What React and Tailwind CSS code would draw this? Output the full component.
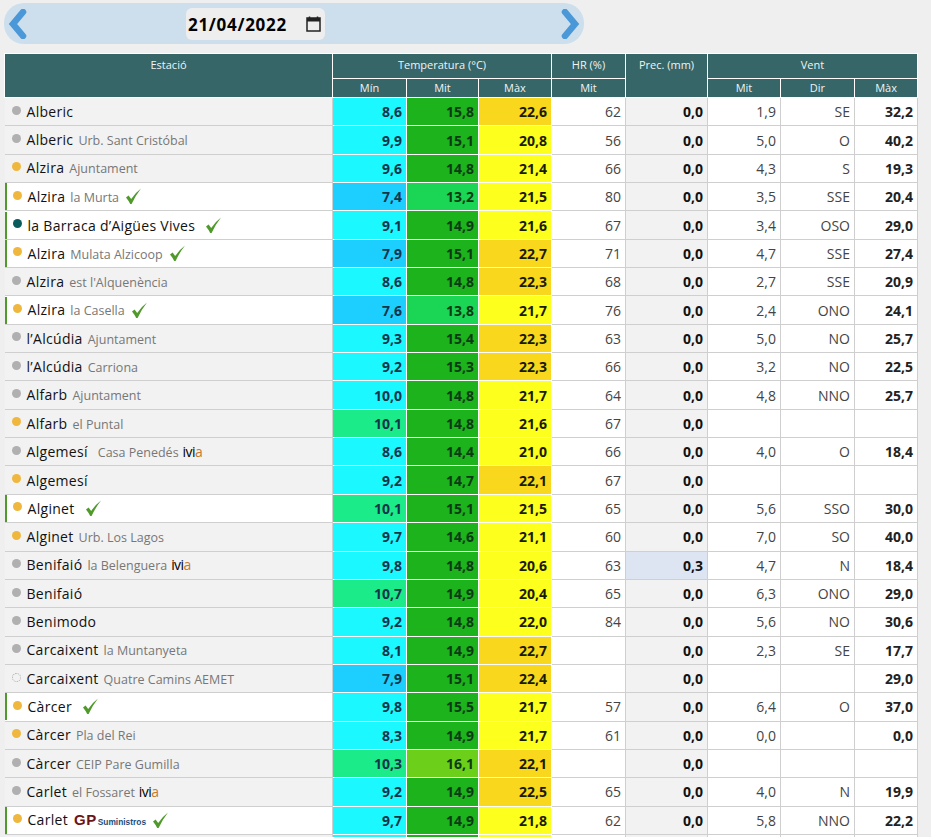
const rows = [
  ["g","Alberic","",0,"8,6","15,8","22,6","62","0,0","1,9","SE","32,2"],
  ["g","Alberic","Urb. Sant Cristóbal",0,"9,9","15,1","20,8","56","0,0","5,0","O","40,2"],
  ["o","Alzira","Ajuntament",0,"9,6","14,8","21,4","66","0,0","4,3","S","19,3"],
  ["o","Alzira","la Murta",1,"7,4","13,2","21,5","80","0,0","3,5","SSE","20,4"],
  ["t","la Barraca d’Aigües Vives","",2,"9,1","14,9","21,6","67","0,0","3,4","OSO","29,0"],
  ["o","Alzira","Mulata Alzicoop",1,"7,9","15,1","22,7","71","0,0","4,7","SSE","27,4"],
  ["g","Alzira","est l'Alquenència",0,"8,6","14,8","22,3","68","0,0","2,7","SSE","20,9"],
  ["o","Alzira","la Casella",1,"7,6","13,8","21,7","76","0,0","2,4","ONO","24,1"],
  ["g","l’Alcúdia","Ajuntament",0,"9,3","15,4","22,3","63","0,0","5,0","NO","25,7"],
  ["g","l’Alcúdia","Carriona",0,"9,2","15,3","22,3","66","0,0","3,2","NO","22,5"],
  ["g","Alfarb","Ajuntament",0,"10,0","14,8","21,7","64","0,0","4,8","NNO","25,7"],
  ["o","Alfarb","el Puntal",0,"10,1","14,8","21,6","67","0,0","","",""],
  ["g","Algemesí","Casa Penedés",0,"8,6","14,4","21,0","66","0,0","4,0","O","18,4","ivia"],
  ["o","Algemesí","",0,"9,2","14,7","22,1","67","0,0","","",""],
  ["o","Alginet","",2,"10,1","15,1","21,5","65","0,0","5,6","SSO","30,0"],
  ["o","Alginet","Urb. Los Lagos",0,"9,7","14,6","21,1","60","0,0","7,0","SO","40,0"],
  ["g","Benifaió","la Belenguera",0,"9,8","14,8","20,6","63","0,3","4,7","N","18,4","ivia"],
  ["g","Benifaió","",0,"10,7","14,9","20,4","65","0,0","6,3","ONO","29,0"],
  ["g","Benimodo","",0,"9,2","14,8","22,0","84","0,0","5,6","NO","30,6"],
  ["g","Carcaixent","la Muntanyeta",0,"8,1","14,9","22,7","","0,0","2,3","SE","17,7"],
  ["d","Carcaixent","Quatre Camins AEMET",0,"7,9","15,1","22,4","","0,0","","","29,0"],
  ["o","Càrcer","",2,"9,8","15,5","21,7","57","0,0","6,4","O","37,0"],
  ["o","Càrcer","Pla del Rei",0,"8,3","14,9","21,7","61","0,0","0,0","","0,0"],
  ["g","Càrcer","CEIP Pare Gumilla",0,"10,3","16,1","22,1","","0,0","","",""],
  ["g","Carlet","el Fossaret",0,"9,2","14,9","22,5","65","0,0","4,0","N","19,9","ivia"],
  ["o","Carlet","",1,"9,7","14,9","21,8","62","0,0","5,8","NNO","22,2","gp"],
];

const num = (s) => parseFloat(s.replace(",", "."));
const minBg = (v) => (v < 8 ? "bg-[#1ccfff]" : v > 10 ? "bg-[#1beb88]" : "bg-[#1cf8ff]");
const mitBg = (v) => (v < 14 ? "bg-[#1bd655]" : v > 16 ? "bg-[#6cd01a]" : "bg-[#1cb31c]");
const maxBg = (v) => (v > 22 ? "bg-[#f9d71c]" : "bg-[#fdff1c]");
const dotBg = { g: "bg-[#b0b0b0]", o: "bg-[#efb73e]", t: "bg-[#0a5c5c]", d: "bg-[#f2f2f2] border border-dotted border-[#aaa]" };

const Check = () => (
  <svg width="17" height="17" viewBox="0 0 17 17" className="block shrink-0">
    <path d="M1 9.5 L3.6 7.6 L6.2 11 Q10 5 16 0.5 Q10.5 7.5 6.6 16 L5.2 16 Q3.5 12.5 1 9.5 Z" fill="#4f9a2b" />
  </svg>
);

const Ivia = () => (
  <span className="text-[14px] text-black ml-1 tracking-[-0.6px]">ivi<span className="text-[#c9772f]">a</span></span>
);

const Gp = () => (
  <span className="ml-[6px] inline-flex items-baseline font-['Liberation_Sans',sans-serif]">
    <span className="text-[15px] font-bold text-[#6b1414] tracking-[0.5px]">GP</span>
    <span className="ml-px text-[8.4px] font-bold text-[#1f4e79]">Suministros</span>
  </span>
);

const th = "border border-white font-normal text-[11px] text-[#eef4f4] bg-[#366668] align-top";
const td = "border-b border-b-[#cfcfcf] border-r px-1 text-right text-[14px] align-middle";

function Row({ r }) {
  const [dot, name, sub, check, mn, mt, mx, hr, prec, vm, vd, vx, extra] = r;
  const hi = check > 0;
  const rain = num(prec) > 0;
  return (
    <tr className="h-[28.35px]">
      <td className={`border-b border-b-[#cfcfcf] border-r border-r-[#cfcfcf] text-left p-0 ${hi ? "bg-white" : "bg-[#f2f2f2]"}`}>
        <div className={`flex items-center h-[27px] whitespace-nowrap ${hi ? "border-l-2 border-[#4f9a2b] pl-[6px]" : "pl-[7px]"}`}>
          <span className={`size-[9px] rounded-full shrink-0 mb-[3px] ${dotBg[dot]}`} />
          <span className="flex items-baseline ml-[6px]">
            <span className="text-[14px] text-[#111] tracking-[0.3px]">{name}</span>
            {sub && <span className={`${extra === "ivia" && name === "Algemesí" ? "ml-[10px]" : "ml-[5px]"} text-[12.5px] text-[#777]`}>{sub}</span>}
            {extra === "ivia" && <Ivia />}
            {extra === "gp" && <Gp />}
          </span>
          {check > 0 && <span className={check === 2 ? "ml-[10px]" : "ml-[6px]"}><Check /></span>}
        </div>
      </td>
      <td className={`${td} border-r-white border-b-white font-bold text-[#14344a] ${minBg(num(mn))}`}>{mn}</td>
      <td className={`${td} border-r-white border-b-white font-bold text-[#0c3a14] ${mitBg(num(mt))}`}>{mt}</td>
      <td className={`${td} border-r-white border-b-white font-bold text-[#1a1a00] ${maxBg(num(mx))}`}>{mx}</td>
      <td className={`${td} border-r-[#cfcfcf] bg-white text-[#444]`}>{hr}</td>
      <td className={`${td} border-r-[#cfcfcf] font-bold text-[#111] ${rain ? "bg-[#dde5f3]" : "bg-[#f2f2f2]"}`}>{prec}</td>
      <td className={`${td} border-r-[#cfcfcf] bg-white text-[#444]`}>{vm}</td>
      <td className={`${td} border-r-[#cfcfcf] bg-white text-[#444]`}>{vd}</td>
      <td className={`${td} border-r-[#cfcfcf] bg-white font-bold text-[#222]`}>{vx}</td>
    </tr>
  );
}

export default function App() {
  return (
    <div className="h-[837px] overflow-hidden bg-[#efefef] font-['Open_Sans',sans-serif]">
      <div className="pt-[3px] pl-1">
        <div className="w-[580px] h-[41px] rounded-[20px] bg-[#cddfec] flex items-center justify-between px-[4px]">
          <svg width="20" height="30" viewBox="0 0 20 30">
            <path d="M15 3 L5 15 L15 27" fill="none" stroke="#4a98d8" strokeWidth="6.5" strokeLinejoin="miter" strokeLinecap="round" />
          </svg>
          <div className="flex items-center justify-between w-[139px] h-[32px] rounded-md bg-[#eeeeee] pl-[2px] pr-[4px] mr-[77px]">
            <span className="text-[17px] font-bold text-black tracking-[0.7px] pt-[2px]">21/04/2022</span>
            <svg width="15" height="16" viewBox="0 0 15 16">
              <path d="M3.5 0.5 V2.5 M11.5 0.5 V2.5" stroke="#222" strokeWidth="1.5" />
              <rect x="1" y="2" width="13" height="13" fill="none" stroke="#222" strokeWidth="1.5" />
              <rect x="1" y="2" width="13" height="3.5" fill="#222" />
            </svg>
          </div>
          <svg width="20" height="30" viewBox="0 0 20 30">
            <path d="M5 3 L15 15 L5 27" fill="none" stroke="#4a98d8" strokeWidth="6.5" strokeLinejoin="miter" strokeLinecap="round" />
          </svg>
        </div>
      </div>
      <div className="pt-[9px] pl-[4px]">
        <table className="border-collapse table-fixed w-[913px]">
          <colgroup>
            <col className="w-[328px]" />
            <col className="w-[74px]" />
            <col className="w-[72px]" />
            <col className="w-[73px]" />
            <col className="w-[74px]" />
            <col className="w-[82px]" />
            <col className="w-[73px]" />
            <col className="w-[74px]" />
            <col className="w-[63px]" />
          </colgroup>
          <thead>
            <tr className="h-[25px]">
              <th rowSpan={2} className={`${th} pt-[3px]`}>Estació</th>
              <th colSpan={3} className={`${th} pt-[3px]`}>Temperatura (°C)</th>
              <th className={`${th} pt-[3px]`}>HR (%)</th>
              <th rowSpan={2} className={`${th} pt-[3px]`}>Prec. (mm)</th>
              <th colSpan={3} className={`${th} pt-[3px]`}>Vent</th>
            </tr>
            <tr className="h-[19px]">
              <th className={`${th} pt-[1px]`}>Mín</th>
              <th className={`${th} pt-[1px]`}>Mit</th>
              <th className={`${th} pt-[1px]`}>Màx</th>
              <th className={`${th} pt-[1px]`}>Mit</th>
              <th className={`${th} pt-[1px]`}>Mit</th>
              <th className={`${th} pt-[1px]`}>Dir</th>
              <th className={`${th} pt-[1px]`}>Màx</th>
            </tr>
          </thead>
          <tbody>
            {rows.map((r, i) => <Row key={i} r={r} />)}
            <tr className="h-[28px]">
              <td className="border-r border-r-[#cfcfcf] bg-[#f2f2f2]" />
              <td className="border-r border-r-white bg-[#1cf8ff]" />
              <td className="border-r border-r-white bg-[#1cb31c]" />
              <td className="border-r border-r-white bg-[#fdff1c]" />
              <td className="border-r border-r-[#cfcfcf] bg-white" />
              <td className="border-r border-r-[#cfcfcf] bg-[#f2f2f2]" />
              <td className="border-r border-r-[#cfcfcf] bg-white" />
              <td className="border-r border-r-[#cfcfcf] bg-white" />
              <td className="border-r border-r-[#cfcfcf] bg-white" />
            </tr>
          </tbody>
        </table>
      </div>
    </div>
  );
}
